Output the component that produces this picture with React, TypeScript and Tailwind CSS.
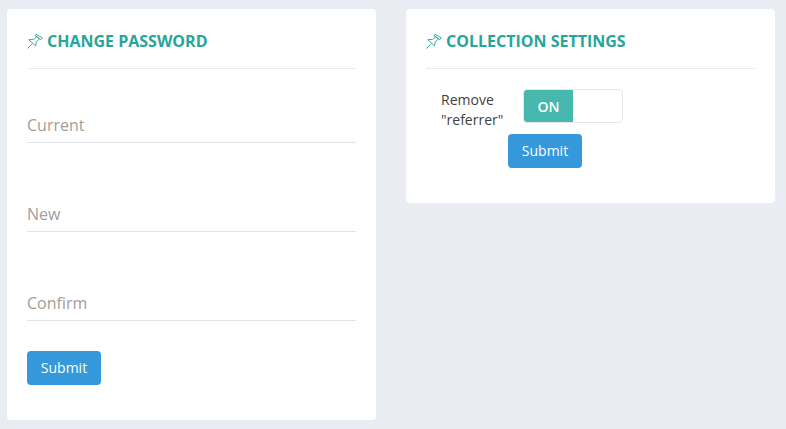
const PinIcon = () => (
  <svg width="16" height="16" viewBox="0 0 16 16" fill="none" stroke="#2aa198" strokeWidth="0.9" strokeLinejoin="round" className="shrink-0">
    <path d="M0.5 15.5 L5.5 10.5" />
    <path d="M1.8 6.6 L8.6 13 L9.2 8.9 L12.4 6 L9.8 3.5 L6.6 6.4 Z" />
    <path d="M9 1.2 L15.2 4.8 L13.8 6.6 L8.2 2.9 Z" />
  </svg>
);

const Heading = ({ title }: { title: string }) => (
  <div className="flex items-center gap-[4px] h-[60px] pt-[5px] border-b border-[#e9ecef]">
    <PinIcon />
    <h3 className="text-[16px] font-bold text-[#26a69a] uppercase leading-none">{title}</h3>
  </div>
);

const Field = ({ label }: { label: string }) => (
  <div className="h-[32px] pb-[4px] flex items-center border-b border-[#e1e4e8] text-[16px] text-[#a39d98]">
    {label}
  </div>
);

const SubmitButton = () => (
  <button className="w-[74px] h-[34px] pb-[2px] bg-[#3498db] rounded-[4px] text-white text-[14px]">Submit</button>
);

export default function App() {
  return (
    <div className="w-[786px] h-[429px] overflow-hidden bg-[#e9ecf3] flex items-start gap-[30px] pl-[7px] pt-[9px] font-['Open_Sans',sans-serif]">
      <div className="w-[369px] h-[411px] bg-white rounded-[4px] px-[20px]">
        <Heading title="Change Password" />
        <div className="mt-[42px] flex flex-col gap-[57px]">
          <Field label="Current" />
          <Field label="New" />
          <Field label="Confirm" />
        </div>
        <div className="mt-[30px]">
          <SubmitButton />
        </div>
      </div>
      <div className="w-[369px] h-[194px] bg-white rounded-[4px] px-[20px]">
        <Heading title="Collection Settings" />
        <div className="mt-[20px] flex">
          <div className="w-[97px] pl-[15px] pt-[1px] text-[14px] leading-[20px] text-[#3f3f3f]">
            Remove
            <br />
            "referrer"
          </div>
          <div className="w-[100px] h-[34px] border border-[#e5e7eb] rounded-[4px] overflow-hidden">
            <div className="w-[49px] h-full bg-[#47b8ad] text-white text-[14px] font-semibold flex items-center justify-center">
              ON
            </div>
          </div>
        </div>
        <div className="mt-[4px] pl-[82px]">
          <SubmitButton />
        </div>
      </div>
    </div>
  );
}
